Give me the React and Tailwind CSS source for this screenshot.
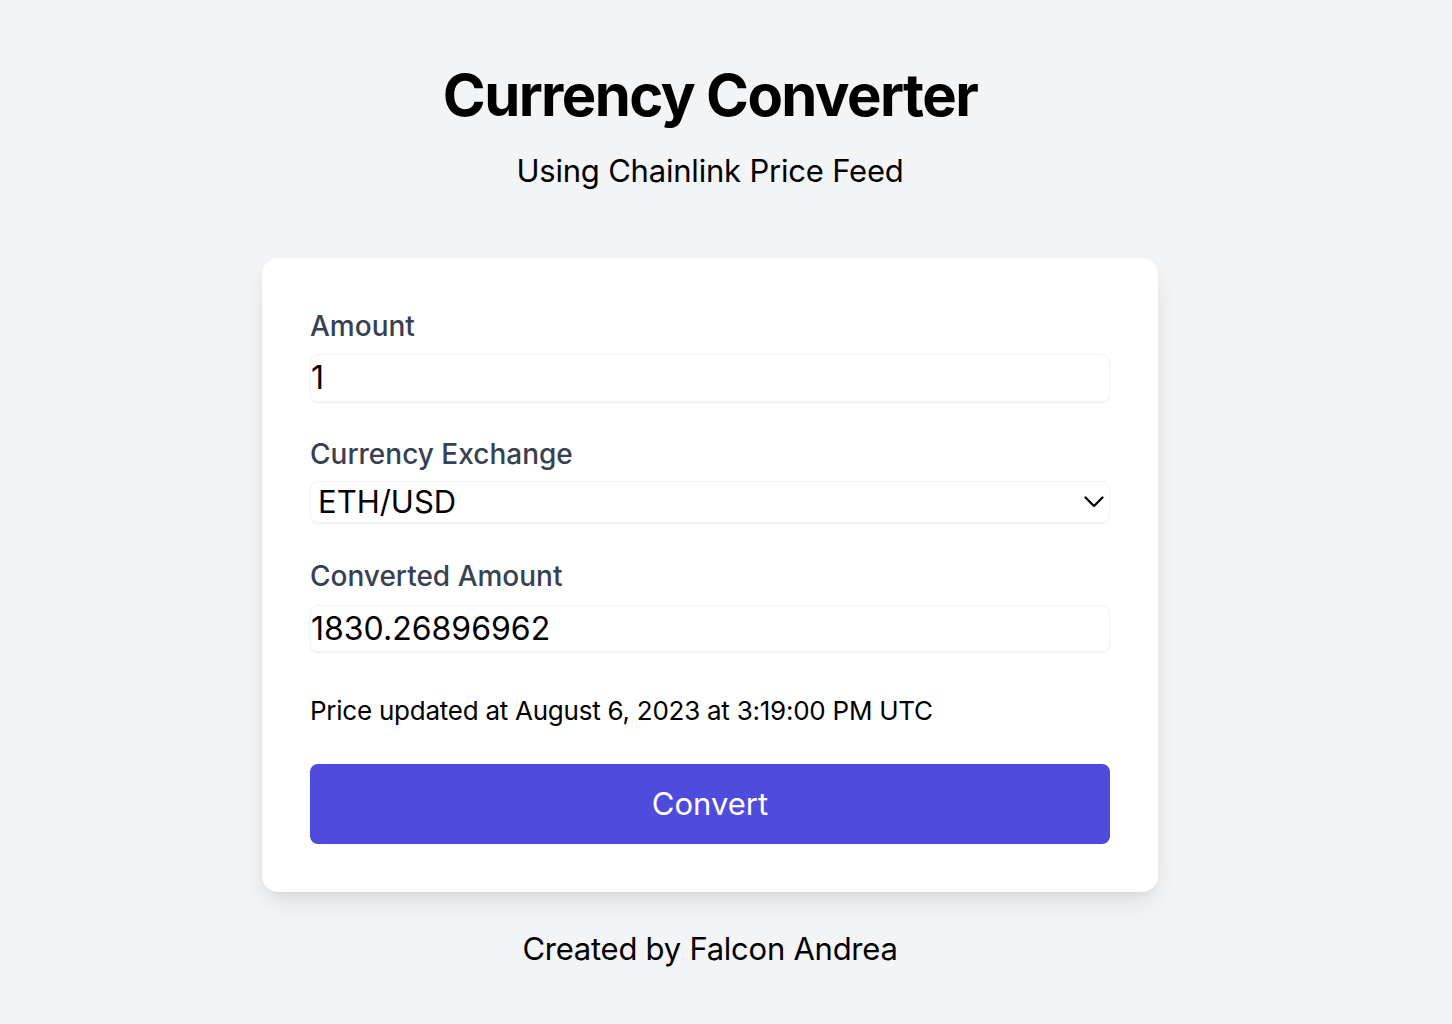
import React from "react";

export default function App() {
  return (
    <div className="min-h-screen bg-[#f3f4f6] flex flex-col items-center pr-[32px] font-['Inter',sans-serif] text-black">
      <h1 className="mt-[59px] text-[58px] leading-[72px] font-bold tracking-[-1.6px]">Currency Converter</h1>
      <p className="mt-[16px] text-[31px] leading-[48px] tracking-[-0.2px]">Using Chainlink Price Feed</p>
      <div className="mt-[63px] w-[896px] bg-white rounded-2xl shadow-[0_12px_24px_-4px_rgba(0,0,0,0.1),0_4px_8px_-4px_rgba(0,0,0,0.08)] p-12 flex flex-col">
        <label className="text-[28px] leading-[40px] font-medium text-[#374151]">Amount</label>
        <input
          className="mt-[8px] h-[48px] w-full rounded-lg border border-[#f5f5f6] shadow-[0_1px_2px_rgba(0,0,0,0.06)] text-[32px] leading-[48px] outline-none bg-white"
          defaultValue="1"
          readOnly
        />
        <label className="mt-[32px] text-[28px] leading-[40px] font-medium text-[#374151]">Currency Exchange</label>
        <div className="mt-[7px] h-[42px] w-full rounded-lg border border-[#f5f5f6] shadow-[0_1px_2px_rgba(0,0,0,0.06)] flex items-center justify-between pl-[7px] pr-[5px]">
          <span className="text-[31px] leading-[42px]">ETH/USD</span>
          <svg width="20" height="12" viewBox="0 0 20 12" fill="none" stroke="#000" strokeWidth="2.2" strokeLinecap="round" strokeLinejoin="round">
            <path d="M1.5 1.5 L10 10 L18.5 1.5" />
          </svg>
        </div>
        <label className="mt-[33px] text-[28px] leading-[40px] font-medium text-[#374151]">Converted Amount</label>
        <input
          className="mt-[9px] h-[47px] w-full rounded-lg border border-[#f5f5f6] shadow-[0_1px_2px_rgba(0,0,0,0.06)] text-[32px] leading-[47px] outline-none bg-white"
          defaultValue="1830.26896962"
          readOnly
        />
        <p className="mt-[39px] text-[26px] leading-[40px] tracking-[-0.25px]">Price updated at August 6, 2023 at 3:19:00 PM UTC</p>
        <button className="mt-[33px] h-[80px] w-full rounded-lg bg-[#4f4bdc] text-white text-[31px]">Convert</button>
      </div>
      <p className="mt-[33px] text-[31px] leading-[48px] tracking-[-0.25px]">Created by Falcon Andrea</p>
    </div>
  );
}
